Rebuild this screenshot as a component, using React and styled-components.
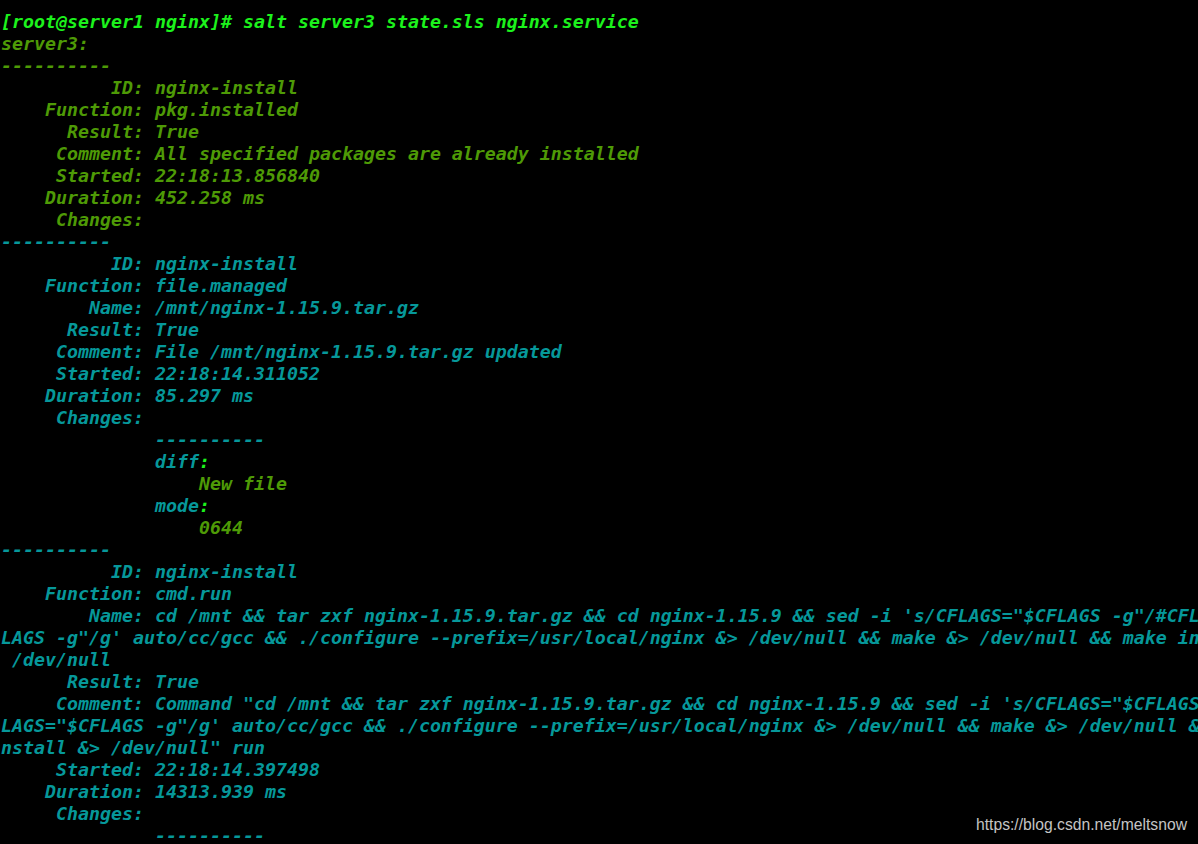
import React from "react";
import styled, { createGlobalStyle } from "styled-components";

const GlobalStyle = createGlobalStyle`
  html, body {
    margin: 0;
    padding: 0;
    background: #000;
    overflow: hidden;
  }
  #root {
    width: 1198px;
    height: 844px;
  }
`;

const COLORS = {
  P: "#1cf21c",
  G: "#4e9a06",
  C: "#06989a",
};

const Screen = styled.div`
  position: relative;
  width: 1198px;
  height: 844px;
  background: #000;
  overflow: hidden;
`;

const Terminal = styled.div`
  display: flex;
  flex-direction: column;
  padding: 11px 0 0 1px;
  font-family: "DejaVu Sans Mono", "Liberation Mono", monospace;
  font-weight: bold;
  font-style: italic;
  font-size: 18.27px;
  line-height: 22px;
`;

const Line = styled.div`
  height: 22px;
  white-space: pre;
  color: ${(p) => COLORS[p.$tone] || COLORS.C};
`;

const Seg = styled.span`
  color: ${(p) => COLORS[p.$tone]};
`;

const Watermark = styled.div`
  position: absolute;
  right: 11px;
  bottom: 10px;
  font-family: "Liberation Sans", Arial, sans-serif;
  font-size: 15.7px;
  color: #c4c4c4;
`;

const cmd =
  "cd /mnt && tar zxf nginx-1.15.9.tar.gz && cd nginx-1.15.9 && sed -i 's/CFLAGS=\"$CFLAGS -g\"/#CFLAGS=\"$CFLAGS -g\"/g' auto/cc/gcc && ./configure --prefix=/usr/local/nginx &> /dev/null && make &> /dev/null && make install &> /dev/null";

function wrap(text, cols) {
  const out = [];
  for (let i = 0; i < text.length; i += cols) out.push(text.slice(i, i + cols));
  return out;
}

const nameLines = wrap("        Name: " + cmd, 117);
const commentLines = wrap('     Comment: Command "' + cmd + '" run', 117);

const lines = [
  { t: "P", s: "[root@server1 nginx]# salt server3 state.sls nginx.service" },
  { t: "G", s: "server3:" },
  { t: "G", s: "----------" },
  { t: "G", s: "          ID: nginx-install" },
  { t: "G", s: "    Function: pkg.installed" },
  { t: "G", s: "      Result: True" },
  { t: "G", s: "     Comment: All specified packages are already installed" },
  { t: "G", s: "     Started: 22:18:13.856840" },
  { t: "G", s: "    Duration: 452.258 ms" },
  { t: "G", s: "     Changes:   " },
  { t: "C", s: "----------" },
  { t: "C", s: "          ID: nginx-install" },
  { t: "C", s: "    Function: file.managed" },
  { t: "C", s: "        Name: /mnt/nginx-1.15.9.tar.gz" },
  { t: "C", s: "      Result: True" },
  { t: "C", s: "     Comment: File /mnt/nginx-1.15.9.tar.gz updated" },
  { t: "C", s: "     Started: 22:18:14.311052" },
  { t: "C", s: "    Duration: 85.297 ms" },
  { t: "C", s: "     Changes:   " },
  { t: "C", s: "              ----------" },
  { t: "C", s: "              diff", tail: ":" },
  { t: "G", s: "                  New file" },
  { t: "C", s: "              mode", tail: ":" },
  { t: "G", s: "                  0644" },
  { t: "C", s: "----------" },
  { t: "C", s: "          ID: nginx-install" },
  { t: "C", s: "    Function: cmd.run" },
  ...nameLines.map((s) => ({ t: "C", s })),
  { t: "C", s: "      Result: True" },
  ...commentLines.map((s) => ({ t: "C", s })),
  { t: "C", s: "     Started: 22:18:14.397498" },
  { t: "C", s: "    Duration: 14313.939 ms" },
  { t: "C", s: "     Changes:   " },
  { t: "C", s: "              ----------" },
];

export default function App() {
  return (
    <Screen>
      <GlobalStyle />
      <Terminal>
        {lines.map((l, i) => (
          <Line key={i} $tone={l.t}>
            {l.s}
            {l.tail && <Seg $tone="P">{l.tail}</Seg>}
          </Line>
        ))}
      </Terminal>
      <Watermark>https://blog.csdn.net/meltsnow</Watermark>
    </Screen>
  );
}
